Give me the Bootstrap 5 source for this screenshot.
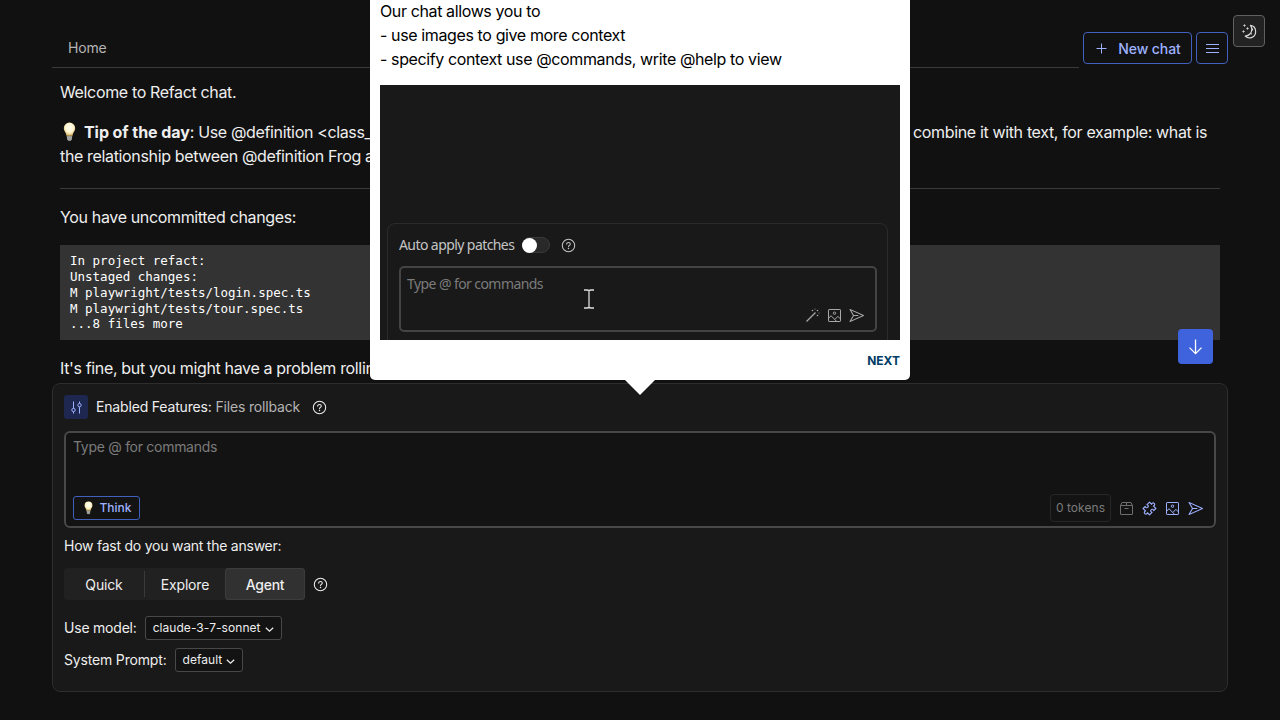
<!DOCTYPE html>
<html lang="en" data-bs-theme="dark">
<head>
<meta charset="utf-8">
<meta name="viewport" content="width=device-width, initial-scale=1">
<title>Refact chat</title>
<link href="https://cdn.jsdelivr.net/npm/bootstrap@5.3.0/dist/css/bootstrap.min.css" rel="stylesheet">
<style>
body{background:#111;color:#eee;font-family:Inter,sans-serif;font-size:16px;line-height:24px}
svg{display:block;flex:none}
.app{height:720px;width:1280px;padding:32px 52px 28px}
.topbar{height:36px}
.tabs{border-bottom:1px solid #3a3a3a;padding:4px 16px 0;font-size:14px;letter-spacing:-.15px;color:#b4b4b4;margin-right:4px}
.ibtn{height:32px;border:1px solid #4260bd;border-radius:4px;color:#9eb1ff;font-size:14px;font-weight:500;background:none;padding:0}
.new-chat{width:109px;gap:9px;letter-spacing:-.1px}
.new-chat span{padding-top:2px}
.menu-btn{width:32px;margin-left:4px}
.theme-btn{top:15px;left:1233px;width:32px;height:32px;border:1px solid #606060;border-radius:4px;background:#222;color:#d8d8d8}
.chat{height:315px;padding:12px 8px 0;letter-spacing:-.35px}
.chat p{margin:0 0 16px;white-space:nowrap}
.chat b{letter-spacing:-.07px}
.bulb{display:inline-block;vertical-align:-4px;margin:0 8px 0 3px}
.rule{height:1px;background:#3a3a3a;margin:20px 0 16px}
.tip-start{display:inline-block;width:853px;height:24px;vertical-align:top}
.code{background:#333;font:12.5px/15.75px "DejaVu Sans Mono",monospace;letter-spacing:0;color:#fff;padding:8.3px 10px 0;height:95px;margin:0 0 16px}
.to-bottom{left:1178px;top:329px;width:35px;height:35px;background:#3e63dd;border-radius:4px;color:#fff}
.composer{height:309px;background:#191919;border:1px solid #2d2d2d;border-radius:8px;padding:11px;font-size:14px;line-height:20px;letter-spacing:-.17px}
.feat-ic{width:24px;height:24px;background:#1d2750;border-radius:3px;color:#9eb1ff;margin-right:8px}
.feat-help{margin-left:12px}
.muted{color:#b4b4b4}
.inputbox{height:97px;border:2px solid #484848;border-radius:6px;background:#131313;margin-top:12px;padding:5px 11px 6px 7px}
.hint{color:#7b7b7b;letter-spacing:-.29px;line-height:17.5px}
.tools{height:24px}
.think{width:67px;height:24px;border:1px solid #4260bd;border-radius:3px;color:#9eb1ff;font-size:12px;font-weight:500;gap:6px;letter-spacing:0;padding-left:3px}
.tokens{width:61px;height:28px;border:1px solid #272727;border-radius:4px;color:#7b7b7b;font-size:12px;letter-spacing:.05px}
.grey-ic{color:#6e6e6e}
.blue{color:#9eb1ff}
.ask{margin-top:8px;letter-spacing:-.24px}
.seg-row{margin-top:12px}
.seg{height:32px;width:241px;background:#212121;border-radius:4px;margin-right:8px;letter-spacing:-.15px}
.seg>div{flex:0 0 80px;padding-top:2px}
.seg .divider{width:1px;height:26px;background:#3a3a3a}
.seg .on{background:#313131;box-shadow:inset 0 0 0 1px #3c3c3c;border-radius:4px;height:32px;font-weight:500;letter-spacing:-.25px}
.model-row{margin-top:16px;letter-spacing:-.21px}
.pick{height:24px;border:1px solid #484848;border-radius:3px;background:#131313;font-size:12px;padding:0 7px;gap:4px;margin-left:8px;letter-spacing:.06px}
.pick svg{margin-top:2px}
.tour{left:370px;top:-20px;width:540px;height:400px;background:#fff;color:#000;border-radius:5px;padding:19px 10px 0}
.tour:after{content:"";position:absolute;left:255px;top:100%;border:15px solid transparent;border-top-color:#fff;border-bottom:0}
.tour-text{letter-spacing:-.38px}
.shot{height:255px;margin-top:14px;background:#191919;padding:138px 12px 0 7px;overflow:hidden;font-family:"Noto Sans",sans-serif;font-size:14px;line-height:20px;color:#c4c4c4}
.shot-card{height:160px;border:1px solid #2b2b2b;border-radius:8px;padding:11px}
.apply{letter-spacing:-.58px}
.toggle{width:28px;height:16px;border-radius:8px;background:#292929;border:1px solid #3a3a3a;margin:0 11px 0 7.500px}
.toggle i{display:block;width:15px;height:15px;border-radius:50%;background:#fff;margin:-.5px}
.shot-input{height:66px;width:478px;border:2px solid #444;border-radius:5px;margin-top:11px;padding:6px}
.cmd{letter-spacing:-.58px;line-height:20px}
.caret-i{left:195px;top:65px}
.shot-icons{right:23px;top:84px;color:#a8a8a8;gap:7px}
.next{font-size:12px;font-weight:700;color:#003c66;line-height:20px;margin-top:11px}
</style>
</head>
<body class="overflow-hidden">
<svg width="0" height="0" class="position-absolute">
<symbol id="help" viewBox="0 0 15 15"><circle cx="7.5" cy="7.5" r="6.2" fill="none" stroke="currentColor" stroke-width="1.05"/><path d="M5.7 6.1C5.7 5 6.5 4.4 7.5 4.4s1.8.6 1.8 1.6c0 1.3-1.8 1.4-1.8 2.6" fill="none" stroke="currentColor" stroke-width="1.05" stroke-linecap="round"/><circle cx="7.5" cy="10.4" r=".75" fill="currentColor"/></symbol>
<symbol id="image" viewBox="0 0 15 15"><g fill="none" stroke="currentColor"><rect x="1.5" y="1.5" width="12" height="12" rx=".6"/><circle cx="7.5" cy="5.2" r="1.2"/><path d="M1.7 10.2 4 7.7l5.6 5.7M8 11.4l2.9-3.1 2.5 2.6"/></g></symbol>
<symbol id="plane" viewBox="0 0 15 15"><path fill="currentColor" fill-rule="evenodd" d="M1.203 1.043C1.005.955.772 1.005.628 1.166.483 1.328.459 1.565.568 1.752L3.921 7.5.568 13.248C.459 13.436.483 13.672.628 13.834.772 13.995 1.005 14.045 1.203 13.957L14.703 7.957C14.884 7.877 15 7.698 15 7.5 15 7.302 14.884 7.123 14.703 7.043ZM4.846 7.1 2.212 2.586 13.269 7.5 2.212 12.414 4.846 7.9H9C9.221 7.9 9.4 7.721 9.4 7.5 9.4 7.279 9.221 7.1 9 7.1Z"/></symbol>
<symbol id="chev" viewBox="0 0 9 9"><path d="M.8 2.7 4.5 6.2 8.2 2.7" fill="none" stroke="currentColor" stroke-width="1.2"/></symbol>
<radialGradient id="glow" cx=".5" cy=".38" r=".6"><stop offset="0" stop-color="#fffef2"/><stop offset=".6" stop-color="#fff6d0"/><stop offset="1" stop-color="#d9b765"/></radialGradient>
<symbol id="bulb" viewBox="0 0 13 20"><path d="M6.5.6a5.7 5.7 0 0 1 5.700 5.700c0 2.900-2.300 4.100-2.700 7.500h-6C3.100 10.400.8 9.200.8 6.300A5.700 5.700 0 0 1 6.500.6Z" fill="url(#glow)"/><path d="M3.700 14h5.600l-.5 3.600-1.300 1.300h-2l-1.300-1.300Z" fill="#8d8d8b"/><path d="M3.900 15.200h5M4.100 17h4.600" stroke="#c9c9c5" stroke-width=".6"/></symbol>
</svg>
<div class="app d-flex flex-column">
  <header class="topbar d-flex align-items-start">
    <nav class="tabs flex-grow-1 align-self-stretch">Home</nav>
    <button class="ibtn new-chat d-flex align-items-center justify-content-center"><svg width="15" height="15" viewBox="0 0 15 15"><path d="M7.500 2.500v10M2.500 7.500h10" stroke="currentColor"/></svg><span>New chat</span></button>
    <button class="ibtn menu-btn d-flex align-items-center justify-content-center"><svg width="15" height="15" viewBox="0 0 15 15"><path d="M1 3.500h13M1 7.500h13M1 11.500h13" stroke="currentColor"/></svg></button>
  </header>
  <main class="chat overflow-hidden">
    <p>Welcome to Refact chat.</p>
    <p><span class="tip-start"><svg class="bulb" width="13" height="20"><use href="#bulb"/></svg><b>Tip of the day</b>: Use @definition &lt;class_</span>combine it with text, for example: what is<br>the relationship between @definition Frog a</p>
    <div class="rule"></div>
    <p>You have uncommitted changes:</p>
    <pre class="code">In project refact:
Unstaged changes:
M playwright/tests/login.spec.ts
M playwright/tests/tour.spec.ts
...8 files more</pre>
    <p>It's fine, but you might have a problem rolling</p>
  </main>
  <section class="composer">
    <div class="d-flex align-items-center">
      <div class="feat-ic d-flex align-items-center justify-content-center"><svg width="15" height="15" viewBox="0 0 15 15"><g fill="none" stroke="currentColor"><path d="M4.500 1.500v6.800M4.500 11.600v2M10.500 1.500v2M10.500 6.800v6.800"/><circle cx="4.500" cy="10" r="1.700"/><circle cx="10.500" cy="5.200" r="1.700"/></g></svg></div>
      <span>Enabled Features: <span class="muted">Files rollback</span></span>
      <svg class="feat-help" width="15" height="15"><use href="#help"/></svg>
    </div>
    <div class="inputbox d-flex flex-column justify-content-between">
      <div class="hint">Type @ for commands</div>
      <div class="tools d-flex align-items-center justify-content-between">
        <div class="think d-flex align-items-center justify-content-center"><svg width="9" height="14"><use href="#bulb"/></svg><span>Think</span></div>
        <div class="d-flex align-items-center gap-2">
          <div class="tokens d-flex align-items-center justify-content-center">0 tokens</div>
          <svg class="grey-ic" width="15" height="15" viewBox="0 0 15 15"><path d="M1.500 4.500 3 1.500h9l1.500 3v8.600a.4.4 0 0 1-.4.4H1.900a.4.4 0 0 1-.4-.4zM1.500 4.500h12M7.500 1.500v3M5.500 7.500h4" fill="none" stroke="currentColor"/></svg>
          <svg class="blue" width="15" height="15" viewBox="0 0 15 15"><path transform="rotate(45 7.500 7.500)" d="M3 3H6C5.200 1.600 5.900.6 7.200.6S9.200 1.600 8.400 3H12V6C10.600 5.200 9.600 6 9.600 7.200S10.600 9.200 12 8.400V12H9C9.800 13.400 9.100 14.400 7.800 14.400S5.800 13.400 6.600 12H3V9C4.400 9.800 5.400 9 5.400 7.800S4.400 5.800 3 6.600Z" fill="none" stroke="currentColor" stroke-width="1.100" stroke-linejoin="round"/></svg>
          <svg class="blue" width="15" height="15"><use href="#image"/></svg>
          <svg class="blue" width="15" height="15"><use href="#plane"/></svg>
        </div>
      </div>
    </div>
    <div class="ask">How fast do you want the answer:</div>
    <div class="seg-row d-flex align-items-center">
      <div class="seg d-flex align-items-center text-center"><div>Quick</div><span class="divider"></span><div>Explore</div><div class="on d-flex align-items-center justify-content-center">Agent</div></div>
      <svg width="15" height="15"><use href="#help"/></svg>
    </div>
    <div class="model-row d-flex align-items-center">Use model:<div class="pick d-flex align-items-center">claude-3-7-sonnet<svg width="9" height="9"><use href="#chev"/></svg></div></div>
    <div class="d-flex align-items-center mt-2">System Prompt:<div class="pick d-flex align-items-center">default<svg width="9" height="9"><use href="#chev"/></svg></div></div>
  </section>
</div>
<button class="theme-btn position-absolute p-0 d-flex align-items-center justify-content-center"><svg width="15" height="15" viewBox="0 0 15 15"><path d="M2.500.3v2.400M1.300 1.500h2.400M5.500 3.300v2.400M4.300 4.500h2.400M1.500 6.300v2.400M.3 7.500h2.400" stroke="currentColor" stroke-width=".85"/><path d="M8.400 1.400C13 2 13.600 6 13.600 7.500a6.100 6.100 0 0 1-10.400 4.600C7 12 9.800 9 9.800 5.200 9.800 3.800 9.300 2.500 8.400 1.400Z" fill="none" stroke="currentColor" stroke-width="1.200" stroke-linejoin="round"/><path d="M10.500 4.500v2M9.500 9.300v1.200" stroke="currentColor"/></svg></button>
<button class="to-bottom position-absolute border-0 p-0 d-flex align-items-center justify-content-center"><svg width="18" height="18" viewBox="0 0 15 15"><path d="M7.100 1.200v11.500M2.100 8l5 5 5-5" fill="none" stroke="currentColor" stroke-width="1.100"/></svg></button>
<aside class="tour position-absolute">
  <div class="tour-text">Our chat allows you to<br>- use images to give more context<br>- specify context use @commands, write @help to view</div>
  <div class="shot"><div class="shot-card position-relative">
    <div class="d-flex align-items-center"><span class="apply">Auto apply patches</span><span class="toggle"><i></i></span><svg width="15" height="15"><use href="#help"/></svg></div>
    <div class="shot-input"><span class="hint cmd">Type @ for commands</span></div>
    <svg class="caret-i position-absolute" width="12" height="20" viewBox="0 0 12 20"><path d="M1 1h3l2 .5 2-.5h3M1 19h3l2-.5 2 .5h3M6 1v18" fill="none" stroke="#ddd" stroke-width="1.300"/></svg>
    <div class="shot-icons position-absolute d-flex"><svg width="15" height="15" viewBox="0 0 15 15"><path d="M1.500 13.500l9-9" stroke="currentColor" stroke-width="1.200"/><g fill="currentColor"><circle cx="7.500" cy="2.500" r=".8"/><circle cx="12.500" cy="2.500" r=".8"/><circle cx="12.500" cy="7.500" r=".8"/><circle cx="10" cy=".9" r=".5"/><circle cx="14" cy="5" r=".5"/></g></svg><svg width="15" height="15"><use href="#image"/></svg><svg width="15" height="15"><use href="#plane"/></svg></div>
  </div></div>
  <div class="next text-end">NEXT</div>
</aside>
<script src="https://cdn.jsdelivr.net/npm/bootstrap@5.3.0/dist/js/bootstrap.bundle.min.js"></script>
</body>
</html>
